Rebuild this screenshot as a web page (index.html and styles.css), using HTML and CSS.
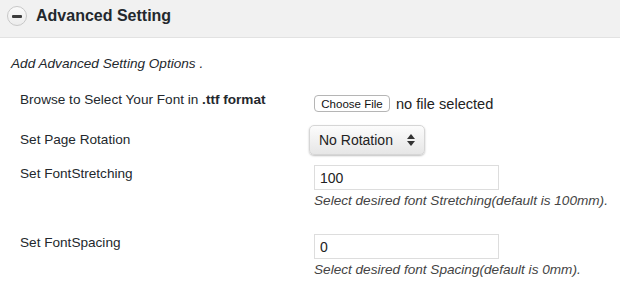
FILE: index.html
```html
<!DOCTYPE html>
<html lang="en">
<head>
    <meta charset="UTF-8">
    <title>Advanced Setting</title>
    <link rel="stylesheet" href="styles.css">
</head>
<body>
    <div class="panel">
        <div class="panel-head">
            <span class="toggle"><span class="bar"></span></span>
            <h2>Advanced Setting</h2>
        </div>
        <div class="panel-body">
            <p class="intro">Add Advanced Setting Options .</p>

            <div class="row row-file">
                <label>Browse to Select Your Font in <b>.ttf format</b></label>
                <div class="field">
                    <button class="choose">Choose File</button>
                    <span class="nofile">no file selected</span>
                </div>
            </div>

            <div class="row row-rotate">
                <label>Set Page Rotation</label>
                <div class="field">
                    <span class="select-wrap">
                        <select>
                            <option>No Rotation</option>
                            <option>90 Degrees</option>
                            <option>180 Degrees</option>
                        </select>
                        <svg class="arrows" width="8" height="12" viewBox="0 0 8 12">
                            <path d="M4 0 L8 5 H0 Z" fill="#333"/>
                            <path d="M4 12 L8 7 H0 Z" fill="#333"/>
                        </svg>
                    </span>
                </div>
            </div>

            <div class="row row-stretch">
                <label>Set FontStretching</label>
                <div class="field">
                    <input type="text" value="100">
                    <p class="help">Select desired font Stretching(default is 100mm).</p>
                </div>
            </div>

            <div class="row row-spacing">
                <label>Set FontSpacing</label>
                <div class="field">
                    <input type="text" value="0">
                    <p class="help">Select desired font Spacing(default is 0mm).</p>
                </div>
            </div>
        </div>
    </div>
</body>
</html>
```

FILE: styles.css
```css
body {
    margin: 0;
    padding: 0;
    background: #fff;
    font-family: 'Liberation Sans', Arial, sans-serif;
    color: #23282d;
}
.panel-head {
    background: #f1f1f1;
    border-bottom: 1px solid #e2e2e2;
    height: 37px;
    display: flex;
    align-items: center;
    padding-left: 7px;
}
.toggle {
    width: 18px;
    height: 18px;
    border-radius: 50%;
    border: 1px solid #c8c8c8;
    background: linear-gradient(#fafafa, #ececec);
    display: flex;
    align-items: center;
    justify-content: center;
    margin-top: -5px;
}
.toggle .bar {
    width: 10px;
    height: 3px;
    background: #3c3c3c;
    border-radius: 1px;
}
.panel-head h2 {
    margin: -5px 0 0 9px;
    font-size: 16px;
    font-weight: bold;
    color: #23282d;
}
.intro {
    margin: 17px 0 0 11px;
    font-size: 13.6px;
    font-style: italic;
    line-height: 18px;
}
.row {
    display: grid;
    grid-template-columns: 294px 1fr;
    padding-left: 20px;
    font-size: 13.6px;
}
.row label {
    line-height: 20px;
}
.row-file {
    margin-top: 15px;
}
.row-file label {
    padding-top: 2px;
}
.row-file .field {
    display: flex;
    align-items: center;
    padding-top: 7px;
}
.choose {
    height: 17px;
    width: 76px;
    padding: 0;
    font-family: 'Liberation Sans', Arial, sans-serif;
    font-size: 11.5px;
    color: #111;
    background: #fff;
    border: 1px solid #b5b5b5;
    border-radius: 4px;
}
.nofile {
    margin-left: 6px;
    font-size: 14.6px;
    color: #222;
}
.row-rotate {
    margin-top: 10px;
}
.row-rotate label {
    padding-top: 8px;
}
.row-rotate .field {
    margin-left: -5px;
    padding-top: 3px;
}
.select-wrap {
    position: relative;
    display: inline-block;
}
.select-wrap select {
    appearance: none;
    -webkit-appearance: none;
    width: 116px;
    height: 30px;
    padding: 0 0 0 9px;
    font-family: 'Liberation Sans', Arial, sans-serif;
    font-size: 14px;
    color: #222;
    border: 1px solid #d6d6d6;
    border-radius: 5px;
    background: linear-gradient(#fcfcfc, #e6e6e6);
    box-shadow: 0 1px 2px rgba(0, 0, 0, 0.25);
}
.select-wrap .arrows {
    position: absolute;
    right: 10px;
    top: 9px;
    pointer-events: none;
}
.row input {
    width: 185px;
    height: 25px;
    box-sizing: border-box;
    border: 1px solid #ddd;
    padding: 0 5px;
    font-family: 'Liberation Sans', Arial, sans-serif;
    font-size: 14px;
    color: #222;
    display: block;
}
.help {
    margin: 2px 0 0;
    font-size: 13.6px;
    font-style: italic;
    line-height: 18px;
    color: #444;
}
.row-stretch {
    margin-top: 7px;
}
.row-stretch label {
    padding-top: 2px;
}
.row-stretch .field {
    padding-top: 3px;
}
.row-spacing {
    margin-top: 18px;
}
.row-spacing label {
    padding-top: 5px;
}
.row-spacing .field {
    padding-top: 6px;
}
```
